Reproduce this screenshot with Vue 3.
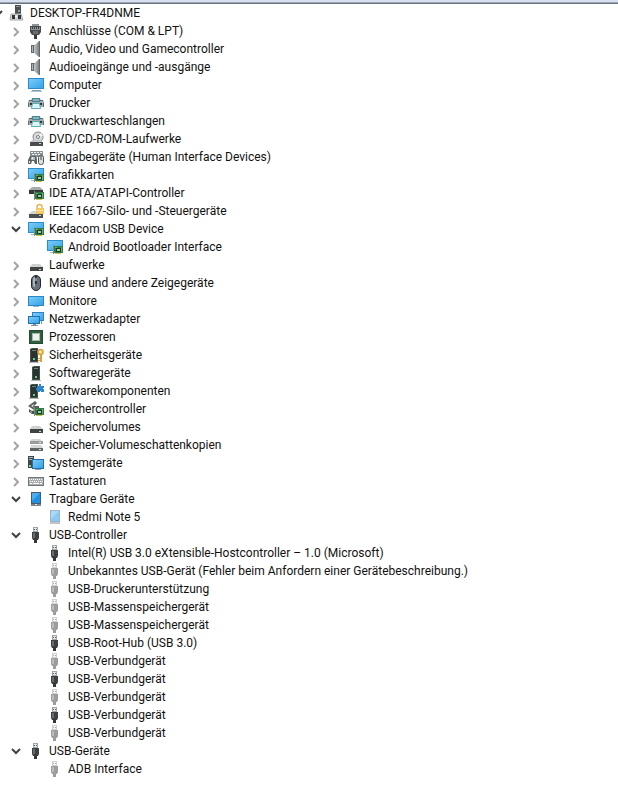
<script setup>
import { ref } from 'vue'

const leaf = (label, icon) => ({ label, icon })
const group = (label, icon, children = []) => ({ label, icon, children, open: children.length > 0 })

const rootOpen = ref(true)
const groups = ref([
  group('Anschlüsse (COM & LPT)', 'port'),
  group('Audio, Video und Gamecontroller', 'speaker'),
  group('Audioeingänge und -ausgänge', 'speaker'),
  group('Computer', 'computer'),
  group('Drucker', 'printer'),
  group('Druckwarteschlangen', 'printer'),
  group('DVD/CD-ROM-Laufwerke', 'dvd'),
  group('Eingabegeräte (Human Interface Devices)', 'hid'),
  group('Grafikkarten', 'display'),
  group('IDE ATA/ATAPI-Controller', 'ide'),
  group('IEEE 1667-Silo- und -Steuergeräte', 'silo'),
  group('Kedacom USB Device', 'display', [leaf('Android Bootloader Interface', 'display')]),
  group('Laufwerke', 'drive'),
  group('Mäuse und andere Zeigegeräte', 'mouse'),
  group('Monitore', 'monitor'),
  group('Netzwerkadapter', 'network'),
  group('Prozessoren', 'cpu'),
  group('Sicherheitsgeräte', 'security'),
  group('Softwaregeräte', 'tower'),
  group('Softwarekomponenten', 'component'),
  group('Speichercontroller', 'storage'),
  group('Speichervolumes', 'drive'),
  group('Speicher-Volumeschattenkopien', 'shadow'),
  group('Systemgeräte', 'system'),
  group('Tastaturen', 'keyboard'),
  group('Tragbare Geräte', 'portable', [leaf('Redmi Note 5', 'portable-dim')]),
  group('USB-Controller', 'usb', [
    leaf('Intel(R) USB 3.0 eXtensible-Hostcontroller – 1.0 (Microsoft)', 'usb'),
    leaf('Unbekanntes USB-Gerät (Fehler beim Anfordern einer Gerätebeschreibung.)', 'usb-dim'),
    leaf('USB-Druckerunterstützung', 'usb-dim'),
    leaf('USB-Massenspeichergerät', 'usb-dim'),
    leaf('USB-Massenspeichergerät', 'usb-dim'),
    leaf('USB-Root-Hub (USB 3.0)', 'usb'),
    leaf('USB-Verbundgerät', 'usb-dim'),
    leaf('USB-Verbundgerät', 'usb'),
    leaf('USB-Verbundgerät', 'usb-dim'),
    leaf('USB-Verbundgerät', 'usb'),
    leaf('USB-Verbundgerät', 'usb-dim'),
  ]),
  group('USB-Geräte', 'usb', [leaf('ADB Interface', 'usb-dim')]),
])
</script>

<template>
  <svg class="sprite" aria-hidden="true">
    <defs>
      <linearGradient id="blue" x1="0" y1="0" x2="1" y2="1">
        <stop offset="0" stop-color="#7accf8" />
        <stop offset="1" stop-color="#35a3e8" />
      </linearGradient>
      <linearGradient id="cone" x1="0" y1="0" x2="1" y2="0">
        <stop offset="0" stop-color="#c6c9cb" />
        <stop offset="1" stop-color="#7c8185" />
      </linearGradient>
      <g id="board">
        <rect x="6" y="6" width="1" height="9" fill="#7e8a80" />
        <rect x="7" y="7" width="9" height="7" fill="#2f7d46" />
        <path d="M8 8h2v1H8zM14 8h1v5h-1z" fill="#6fae6c" />
        <rect x="9" y="9" width="5" height="4" fill="#173f27" />
        <rect x="10" y="10" width="3" height="2" fill="#a9c7a5" />
        <path d="M8 14h6v1H8z" fill="#d4bc4a" />
      </g>
      <g id="tower-body">
        <path d="M2 2l2-1h6v14H2z" fill="#46524d" />
        <rect x="3" y="2" width="6" height="12" fill="#27342f" />
        <rect x="4" y="3" width="4" height="1" fill="#718078" />
        <rect x="5" y="11" width="2" height="2" fill="#75c787" />
        <rect x="1" y="15" width="10" height="1" fill="#b2b8b5" />
      </g>
    </defs>

    <symbol id="pc" viewBox="0 0 16 16">
      <rect x="6" y="0" width="6" height="9" fill="#4b4f52" />
      <rect x="7" y="1" width="4" height="1" fill="#8d9295" />
      <rect x="9" y="5" width="2" height="2" fill="#9a9fa2" />
      <path d="M2 9h10l2 6H1z" fill="#d6d8da" stroke="#a3a7aa" />
      <rect x="3" y="10" width="3" height="4" fill="#30363a" />
      <rect x="9" y="10" width="3" height="4" fill="#30363a" />
      <rect x="6" y="11" width="2" height="1" fill="#fff" />
    </symbol>
    <symbol id="port" viewBox="0 0 16 16">
      <path d="M4 1h7v2H4z" fill="#8f9395" />
      <path d="M2 3h11v6l-2 3H4L2 9z" fill="#484c4e" />
      <path d="M3 4h9v3H3z" fill="#8f9497" />
      <path d="M4 4h1v2H4zM6 4h1v2H6zM8 4h1v2H8zM10 4h1v2h-1z" fill="#3d4042" />
      <path d="M5 8h5v3H5z" fill="#6a6e70" />
      <path d="M6 12h3v4H6z" fill="#393c3e" />
    </symbol>
    <symbol id="speaker" viewBox="0 0 16 16">
      <path d="M3 4h4v8H3z" fill="#63686c" />
      <path d="M4 5h1v6H4z" fill="#aeb3b6" />
      <path d="M6 5l5-5v16l-5-4z" fill="url(#cone)" />
      <path d="M11 0h1v16h-1z" fill="#63686c" />
    </symbol>
    <symbol id="computer" viewBox="0 0 16 16">
      <rect y="1" width="16" height="11" fill="#2a8acb" />
      <rect x="1" y="2" width="14" height="9" fill="url(#blue)" />
      <rect x="4" y="13" width="9" height="1" fill="#7f9aab" />
      <rect x="3" y="14" width="11" height="1" fill="#b4c3cc" />
    </symbol>
    <symbol id="monitor" viewBox="0 0 16 16">
      <rect y="3" width="16" height="10" fill="#2a86c8" />
      <rect x="1" y="4" width="14" height="8" fill="url(#blue)" />
      <rect x="5" y="13" width="6" height="1" fill="#9db1bd" />
    </symbol>
    <symbol id="printer" viewBox="0 0 16 16">
      <path d="M4 3h8l1 4H3z" fill="#4e8793" />
      <path d="M5 4h6v2H5z" fill="#7fb4bd" />
      <path d="M1 5h3v2h8V5h3l1 2v5H0V7z" fill="#a3abae" />
      <path d="M1 5h3v1H1zM12 5h3v1h-3z" fill="#626b6f" />
      <path d="M2 8h12v2H2z" fill="#252c30" />
      <path d="M0 8h1v4H0zM15 8h1v4h-1z" fill="#667075" />
      <path d="M4 8h8l1 6H3z" fill="#5fabb5" />
      <path d="M5 9h6l1 4H4z" fill="#d8f5f4" />
    </symbol>
    <symbol id="dvd" viewBox="0 0 16 16">
      <circle cx="10" cy="6" r="5" fill="#d7d9da" stroke="#85898c" />
      <path d="M10 6l3-4 2 3z" fill="#f6f6f6" />
      <circle cx="10" cy="6" r="1.5" fill="#fff" stroke="#777b7e" />
      <path d="M4 9h8l3 2H2z" fill="#c5c8c8" />
      <rect x="2" y="11" width="13" height="4" fill="#4a4e50" />
      <rect x="11" y="12" width="2" height="1" fill="#b4e2ae" />
    </symbol>
    <symbol id="hid" viewBox="0 0 16 16">
      <path d="M2 2h13v6H2z" fill="#8b9093" />
      <path d="M3 3h2v1H3zM6 3h2v1H6zM9 3h2v1H9zM12 3h2v1h-2zM4 5h2v1H4zM7 5h2v1H7zM10 5h2v1h-2z" fill="#f2f3f3" />
      <path d="M2 7h6l1 3v5H7l-1-3H4l-1 3H0v-4z" fill="#5d6366" />
      <path d="M3 8h4v3H3z" fill="#b4b9bb" />
      <path d="M4 8h1v2H4zM1 12h1v2H1z" fill="#f0f1f1" />
      <rect x="10.500" y="6.500" width="5" height="9" rx="2" fill="#dadddd" stroke="#4f5558" />
      <path d="M13 7v4" stroke="#3d4245" />
    </symbol>
    <symbol id="display" viewBox="0 0 16 16">
      <rect y="1" width="16" height="11" fill="#2e8dcc" />
      <rect x="1" y="2" width="14" height="9" fill="url(#blue)" />
      <rect x="3" y="13" width="3" height="1" fill="#9fb3bf" />
      <use href="#board" />
    </symbol>
    <symbol id="ide" viewBox="0 0 16 16">
      <path d="M4 2h8l3 3H1z" fill="#a6abac" />
      <path d="M1 5h14v4H1z" fill="#343a3c" />
      <use href="#board" />
    </symbol>
    <symbol id="silo" viewBox="0 0 16 16">
      <path d="M4 8h8l3 3H1z" fill="#d3d5d4" />
      <path d="M1 11h14v4H1z" fill="#4c5051" />
      <rect x="11" y="12" width="2" height="1" fill="#c2dfb4" />
      <path d="M9 6V4a2.500 2.500 0 0 1 5 0v2" fill="none" stroke="#e2b85c" stroke-width="1.500" />
      <path d="M8 5h8v6H8z" fill="#f3c967" />
      <path d="M9 7h6v1H9z" fill="#ffe6a6" />
    </symbol>
    <symbol id="drive" viewBox="0 0 16 16">
      <path d="M4 7h8l3 3H2z" fill="#cfd1d1" />
      <path d="M2 10h13v4H2z" fill="#404446" />
      <rect x="11" y="12" width="2" height="1" fill="#bdecb5" />
    </symbol>
    <symbol id="shadow" viewBox="0 0 16 16">
      <path d="M4 2h8l2 2H2z" fill="#d4d6d6" />
      <path d="M2 4h13v3H2z" fill="#989c9d" />
      <path d="M3 8h10l2 3H2z" fill="#d5d7d7" />
      <path d="M2 11h13v3H2z" fill="#606567" />
      <path d="M11 5h2v1h-2zM11 12h2v1h-2z" fill="#d9f0d4" />
    </symbol>
    <symbol id="mouse" viewBox="0 0 16 16">
      <rect x="3.500" y=".5" width="9" height="15" rx="4.500" fill="#68717b" stroke="#22272c" />
      <path d="M5 4c0-2 2-2 2-2v10c-2 0-2-2-2-3z" fill="#aab2bb" />
      <path d="M7 1h2v8H7z" fill="#2b3137" />
      <path d="M8 3v3" stroke="#dce2e8" />
    </symbol>
    <symbol id="network" viewBox="0 0 16 16">
      <rect x="4" y="1" width="12" height="9" fill="#2c83c4" />
      <rect x="5" y="2" width="10" height="7" fill="url(#blue)" />
      <rect y="5" width="12" height="8" fill="#226fae" />
      <rect x="1" y="6" width="10" height="6" fill="url(#blue)" />
      <path d="M5 13h3v1h2v1H3v-1h2zM13 10h1v3h-1z" fill="#7c919e" />
    </symbol>
    <symbol id="cpu" viewBox="0 0 16 16">
      <rect x="1" y="1" width="14" height="14" fill="#315e41" />
      <path d="M1.500 1.500h13v13h-13z" fill="none" stroke="#173c25" stroke-dasharray="1 1" />
      <rect x="4" y="4" width="8" height="8" fill="#a7b9a9" />
      <rect x="5" y="5" width="6" height="6" fill="#eff2ee" />
    </symbol>
    <symbol id="tower" viewBox="0 0 16 16">
      <use href="#tower-body" x="2" />
    </symbol>
    <symbol id="security" viewBox="0 0 16 16">
      <use href="#tower-body" />
      <circle cx="12.500" cy="5" r="2.500" fill="#fae0a2" stroke="#d49d36" stroke-width="1.500" />
      <path d="M12 8h2v7h-2zM10 11h2v1h-2zM10 13h2v1h-2z" fill="#d8a13c" />
    </symbol>
    <symbol id="component" viewBox="0 0 16 16">
      <use href="#tower-body" />
      <path d="M9 3h2V1h2v2h3v2h-1v1h1v3h-3V8h-1v1H9V7H8V5h1z" fill="#2f87cf" />
    </symbol>
    <symbol id="storage" viewBox="0 0 16 16">
      <path d="M7 0l2 2-3 3h5v3H7L6 9 0 5z" fill="#5a6061" />
      <path d="M6 3L3 5l4 2V6H5z" fill="#e4e7e7" />
      <path d="M1 8l3 2 3-1v4H4L1 11z" fill="#4a5051" />
      <path d="M2 10l2 1v1l-2-1z" fill="#b9bdbe" />
      <use href="#board" />
    </symbol>
    <symbol id="system" viewBox="0 0 16 16">
      <rect x="0" y="1" width="6" height="12" fill="#3c464b" />
      <path d="M1 2h4v1H1zM1 4h3v1H1z" fill="#aab5bb" />
      <rect x="1" y="10" width="2" height="2" fill="#83d489" />
      <rect x="4" y="4" width="12" height="10" fill="#256fa9" />
      <rect x="5" y="5" width="10" height="8" fill="url(#blue)" />
      <rect x="7" y="14" width="6" height="1" fill="#8ba2b0" />
    </symbol>
    <symbol id="keyboard" viewBox="0 0 16 16">
      <rect y="4" width="16" height="9" fill="#71777a" />
      <rect x="1" y="5" width="14" height="7" fill="#a9aeb1" />
      <path d="M1 6.500h14M2 8.500h13" stroke="#fff" stroke-dasharray="1 1" />
      <path d="M2 10.500h2M5 10.500h6M12 10.500h2" stroke="#fff" />
    </symbol>
    <symbol id="portable" viewBox="0 0 16 16">
      <rect x="3" y="1" width="10" height="14" fill="#4b5964" />
      <rect x="4" y="2" width="8" height="10" fill="#1d91e5" />
      <path d="M4 2h8L4 10z" fill="#49aef0" />
      <rect x="3" y="13" width="10" height="2" fill="#7b858c" />
      <rect x="7" y="13" width="2" height="1" fill="#e2e7ea" />
    </symbol>
    <symbol id="portable-dim" viewBox="0 0 16 16">
      <rect x="3" y="1" width="10" height="14" fill="#a2b3bf" />
      <rect x="4" y="2" width="8" height="10" fill="#8bcaf4" />
      <path d="M4 2h8L4 10z" fill="#a7d9f8" />
      <rect x="3" y="13" width="10" height="2" fill="#bdc5ca" />
    </symbol>
    <symbol id="usb" viewBox="0 0 16 16">
      <rect x="5" y="0" width="5" height="5" fill="#a1a4a6" />
      <rect x="6" y="1" width="3" height="3" fill="#e6e7e8" />
      <path d="M6 2h1v1H6zM8 2h1v1H8z" fill="#5c6062" />
      <path d="M4 5h7v6l-1 2H5l-1-2z" fill="#3e4143" />
      <path d="M5 6h2v5H5z" fill="#686c6e" />
      <path d="M6 12h3v4H6z" fill="#35383a" />
    </symbol>
    <symbol id="usb-dim" viewBox="0 0 16 16">
      <rect x="5" y="0" width="5" height="5" fill="#cfd0d1" />
      <rect x="6" y="1" width="3" height="3" fill="#f4f4f4" />
      <path d="M6 2h1v1H6zM8 2h1v1H8z" fill="#a8aaab" />
      <path d="M4 5h7v6l-1 2H5l-1-2z" fill="#9b9d9e" />
      <path d="M5 6h2v5H5z" fill="#b9bbbc" />
      <path d="M6 12h3v4H6z" fill="#9b9d9e" />
    </symbol>
  </svg>

  <main class="panel">
    <div class="node">
      <button class="toggle open" type="button" aria-label="DESKTOP-FR4DNME" :aria-expanded="rootOpen" @click="rootOpen = !rootOpen">
        <svg viewBox="0 0 16 16"><path d="M4 6l4 4 4-4" /></svg>
      </button>
      <svg class="icon"><use href="#pc" /></svg>
      <span>DESKTOP-FR4DNME</span>
    </div>
    <ul v-if="rootOpen" class="branch">
      <li v-for="item in groups" :key="item.label">
        <div class="node">
          <button
            class="toggle"
            :class="{ open: item.open }"
            type="button"
            :aria-label="item.label"
            :aria-expanded="item.open"
            @click="item.open = !item.open"
          >
            <svg viewBox="0 0 16 16"><path :d="item.open ? 'M3 6l4 4 4-4' : 'M5 5l4 4-4 4'" /></svg>
          </button>
          <svg class="icon"><use :href="'#' + item.icon" /></svg>
          <span>{{ item.label }}</span>
        </div>
        <ul v-if="item.open && item.children.length" class="branch">
          <li v-for="(child, i) in item.children" :key="i" class="node leaf">
            <svg class="icon"><use :href="'#' + child.icon" /></svg>
            <span>{{ child.label }}</span>
          </li>
        </ul>
      </li>
    </ul>
  </main>
</template>

<style>
body {
  margin: 0;
  background: #fff;
}
</style>

<style scoped>
.sprite {
  position: absolute;
  width: 0;
  height: 0;
}
.panel {
  overflow: hidden;
  border-top: 2px solid #d6e0ee;
  box-shadow: inset 0 1px #9aa5b3, inset 0 2px #69717b;
  padding-top: 2px;
  color: #111;
  font: 12px/18px Roboto, "Segoe UI", sans-serif;
}
.panel > .node,
.panel > .branch {
  margin-left: -10px;
}
.branch {
  margin: 0;
  padding: 0 0 0 19px;
  list-style: none;
}
.node {
  display: flex;
  align-items: center;
  height: 18px;
  white-space: nowrap;
}
.leaf {
  padding-left: 19px;
}
.toggle {
  flex: none;
  width: 16px;
  height: 16px;
  margin: 0 3px 0 0;
  padding: 0;
  border: 0;
  background: none;
}
.toggle svg {
  display: block;
  width: 16px;
  height: 16px;
}
.toggle path {
  fill: none;
  stroke: #a3a3a3;
  stroke-width: 2;
}
.toggle.open path {
  stroke: #404040;
}
.icon {
  flex: none;
  width: 16px;
  height: 16px;
  margin-right: 5px;
}
</style>
